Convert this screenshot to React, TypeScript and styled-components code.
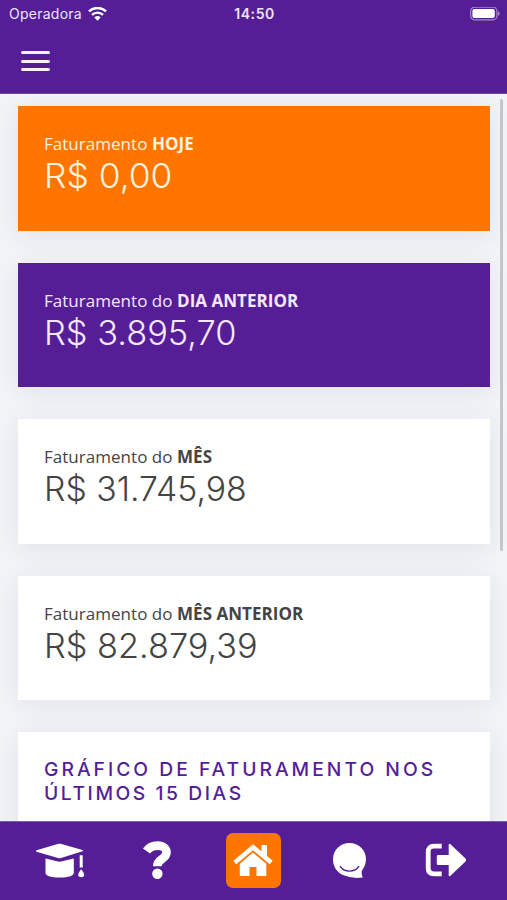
import React from 'react';
import styled, { createGlobalStyle } from 'styled-components';

const purple = '#551e97';
const orange = '#ff7500';

const GlobalStyle = createGlobalStyle`
  * { box-sizing: border-box; }
  body { margin: 0; background: #f3f4f8; }
`;

const Screen = styled.div`
  display: flex;
  flex-direction: column;
  position: relative;
  width: 507px;
  height: 900px;
  overflow: hidden;
  background: #f3f4f8;
  font-family: 'Open Sans', sans-serif;
`;

const Header = styled.header`
  flex: none;
  height: 94px;
  background: ${purple};
  color: #fff;
  z-index: 1;
  border-bottom: 1px solid #6d47a5;
`;

const StatusBar = styled.div`
  display: grid;
  grid-template-columns: 1fr auto 1fr;
  align-items: center;
  height: 28px;
  padding: 0 7px 0 9px;
  font: 400 14px/28px Inter, sans-serif;
  color: #eee4fa;
`;

const Carrier = styled.div`
  display: flex;
  align-items: center;
  gap: 6px;
  letter-spacing: 0.25px;
`;

const Clock = styled.div`
  font-weight: 600;
  letter-spacing: 0.6px;
`;

const Battery = styled.svg`
  justify-self: end;
`;

const MenuButton = styled.button`
  display: flex;
  flex-direction: column;
  gap: 5.6px;
  margin: 23px 0 0 21px;
  padding: 0;
  border: 0;
  background: none;
`;

const MenuBar = styled.span`
  width: 28.5px;
  height: 3px;
  border-radius: 2px;
  background: #f6effc;
`;

const Content = styled.main`
  flex: 1;
  min-height: 0;
  overflow: hidden;
  display: flex;
  flex-direction: column;
  gap: 32px;
  padding: 12px 17px 0 18px;
`;

const Card = styled.section<{ $bg?: string; $fg?: string; $tall?: boolean }>`
  flex: none;
  height: ${p => (p.$tall ? 180 : 124.6)}px;
  padding: 26px;
  background: ${p => p.$bg ?? '#fff'};
  color: ${p => p.$fg ?? '#444'};
  box-shadow: 0 4px 26px rgba(40, 44, 60, 0.09);
`;

const Label = styled.div`
  font-size: 17px;
  line-height: 24px;
  letter-spacing: 0.03px;
  white-space: nowrap;
`;

const Amount = styled.div<{ $stretch: number }>`
  width: max-content;
  font: 300 33.7px/40px Inter, sans-serif;
  white-space: nowrap;
  transform: scaleX(${p => p.$stretch});
  transform-origin: left;
`;

const Title = styled.h2`
  margin: 0;
  font: 500 19.3px/23.3px Inter, sans-serif;
  color: ${purple};
  white-space: nowrap;
`;

const TitleLine = styled.span<{ $tracking: number }>`
  display: block;
  letter-spacing: ${p => p.$tracking}px;
`;

const ScrollThumb = styled.div`
  position: absolute;
  top: 99px;
  right: 4px;
  width: 3.5px;
  height: 452px;
  border-radius: 2px;
  background: #c5c6ca;
`;

const TabBar = styled.nav`
  flex: none;
  display: grid;
  grid-template-columns: repeat(5, 96.5px);
  justify-content: center;
  height: 79px;
  padding: 0 1px 2px 0;
  border-top: 1px solid #7d5cb0;
  background: ${purple};
  z-index: 1;
`;

const Tab = styled.a`
  display: flex;
  align-items: center;
  justify-content: center;
  color: #fff;
`;

const ActiveTile = styled.span`
  display: flex;
  align-items: center;
  justify-content: center;
  width: 55px;
  height: 55px;
  border-radius: 7px;
  background: ${orange};
`;

const cards = [
  { prefix: 'Faturamento', strong: 'HOJE', value: 'R$ 0,00', bg: orange, fg: '#fff3df', stretch: 1.05 },
  { prefix: 'Faturamento do', strong: 'DIA ANTERIOR', value: 'R$ 3.895,70', bg: purple, fg: '#f5e8ff', stretch: 1.02 },
  { prefix: 'Faturamento do', strong: 'MÊS', value: 'R$ 31.745,98', stretch: 1.003 },
  { prefix: 'Faturamento do', strong: 'MÊS ANTERIOR', value: 'R$ 82.879,39', stretch: 1.018 },
];

export default function App() {
  return (
    <Screen>
      <GlobalStyle />
      <Header>
        <StatusBar>
          <Carrier>
            Operadora
            <svg width="19" height="14" viewBox="0 0 19 14" fill="none" stroke="#fff" strokeWidth="2.4">
              <path d="M1 4.4a12.2 12.2 0 0 1 17 0" />
              <path d="M4 7.8a8 8 0 0 1 11 0" />
              <path d="M6.4 10.5a4.5 4.5 0 0 1 6.2 0L9.5 13.7z" fill="#fff" stroke="none" />
            </svg>
          </Carrier>
          <Clock>14:50</Clock>
          <Battery width="31" height="14" viewBox="0 0 31 14">
            <rect x="1.7" y="0.2" width="26.2" height="12.6" rx="3.8" fill="none" stroke="#a78bc9" strokeWidth="1.2" />
            <rect x="3.4" y="2" width="22.4" height="9" rx="2" fill="#fff" />
            <path d="M29 4.2c2.2.8 2.2 3.8 0 4.6z" fill="#a78bc9" />
          </Battery>
        </StatusBar>
        <MenuButton aria-label="Menu">
          <MenuBar />
          <MenuBar />
          <MenuBar />
        </MenuButton>
      </Header>
      <Content>
        {cards.map(c => (
          <Card key={c.value} $bg={c.bg} $fg={c.fg}>
            <Label>
              {c.prefix} <b>{c.strong}</b>
            </Label>
            <Amount $stretch={c.stretch}>{c.value}</Amount>
          </Card>
        ))}
        <Card $tall>
          <Title>
            <TitleLine $tracking={3}>GRÁFICO DE FATURAMENTO NOS</TitleLine>
            <TitleLine $tracking={2.55}>ÚLTIMOS 15 DIAS</TitleLine>
          </Title>
        </Card>
      </Content>
      <ScrollThumb />
      <TabBar>
        <Tab>
          <svg width="50" height="36" viewBox="0 0 50 36" fill="#fff">
            <path d="M1.5 8.2 23.5 1.8q1-.3 2 0L47.5 8q1.500.6 0 1.300L26 16.1q-1.500.4-3 0L1.5 9.700q-1.300-.8 0-1.500z" />
            <path d="M10.500 16.500 23 19.600q1.500.3 3 0l12.800-3.100v14.200q0 4.700-14.200 4.700t-14.100-4.700z" />
            <path d="M44.700 13.200h3v12.200h-3zM46.200 27.200q6 7.600 0 8-6-.4 0-8z" />
          </svg>
        </Tab>
        <Tab>
          <svg width="30" height="40" viewBox="0 0 30 40">
            <path d="M4.500 11C9.500 3.800 24.500 3.500 24.500 12.300c0 7.200-9.300 6.200-9.300 14" fill="none" stroke="#fff" strokeWidth="8.600" />
            <circle cx="15.400" cy="33.800" r="5.200" fill="#fff" />
          </svg>
        </Tab>
        <Tab>
          <ActiveTile>
            <svg width="40" height="34" viewBox="0 0 40 34" fill="#fff">
              <path d="M1.800 19.600 20 4.200l18.200 15.400" fill="none" stroke="#fff" strokeWidth="4.600" />
              <path d="M28.500 2h5.500v14l-5.500-4.600zM6.800 20.700 20 9.600l13.300 11.100V33h-9.800v-9h-7v9H6.800z" />
            </svg>
          </ActiveTile>
        </Tab>
        <Tab>
          <svg width="36" height="38" viewBox="0 0 36 38">
            <path d="M17.500 2C26.800 2 34 9 34 18.200c0 4.800-2 8.800-4.300 11.800q-.5 3.500 1 6.500Q20 38 11 34C5 31.500 1 25.500 1 18.500 1 9 8.200 2 17.500 2z" fill="#fff" />
            <path d="M8 25.200c4 6.500 15 6.500 19 0" fill="none" stroke={purple} strokeWidth="1.400" />
          </svg>
        </Tab>
        <Tab>
          <svg width="42" height="34" viewBox="0 0 42 34">
            <path d="M16.700 3.200H9q-5.800 0-5.800 5.800v16q0 5.800 5.800 5.800h7.700" fill="none" stroke="#fff" strokeWidth="4.800" />
            <path d="M13 12h10.700V2q0-2 1.800-.7L40.500 15.600q1.300 1.400 0 2.800L25.500 32.700q-1.800 1.300-1.800-.7V22H13q-1.200 0-1.200-1.200v-7.600Q11.800 12 13 12z" fill="#fff" />
          </svg>
        </Tab>
      </TabBar>
    </Screen>
  );
}
